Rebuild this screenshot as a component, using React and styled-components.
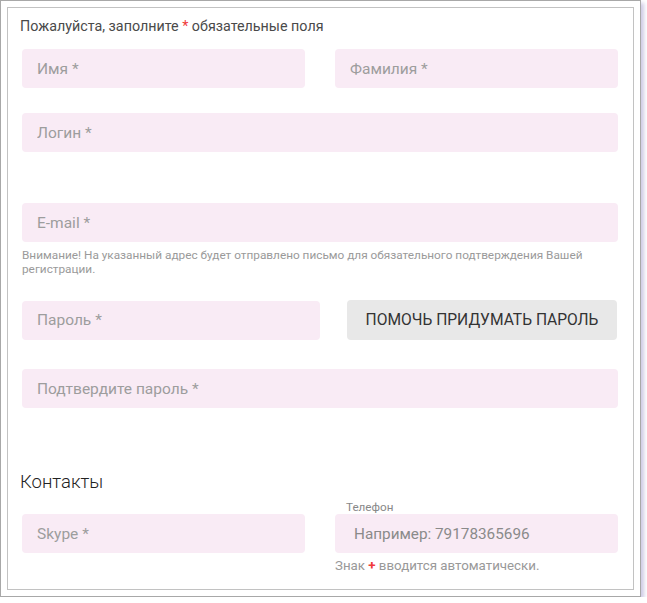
import React from "react";
import styled, { createGlobalStyle } from "styled-components";

const Global = createGlobalStyle`
  html, body { margin: 0; padding: 0; background: #fff; }
  body { font-family: Roboto, "Noto Sans", Arial, sans-serif; }
  * { box-sizing: border-box; }
`;

const Frame = styled.div`
  width: 641px;
  height: 597px;
  border: 1px solid #a8a8a8;
  padding: 6px;
  background: #fff;
  box-shadow: 3px 3px 4px rgba(190, 184, 220, 0.75);
`;

const Panel = styled.div`
  height: 583px;
  border: 1px solid #c2c2c2;
  padding: 10px 15px 0 14px;
  display: flex;
  flex-direction: column;
  & > * { flex-shrink: 0; }
`;

const Title = styled.div`
  margin-left: -2px;
  font-size: 14.3px;
  line-height: 16px;
  color: #4a4a4a;
`;

const Req = styled.span`
  color: #f03a3a;
`;

const Row = styled.div`
  display: flex;
  gap: ${(p) => p.$gap || 30}px;
  align-items: ${(p) => p.$align || "center"};
  margin-top: ${(p) => p.$mt || 0}px;
`;

const Col = styled.div`
  flex: 1;
  min-width: 0;
  display: flex;
  flex-direction: column;
  padding-top: ${(p) => p.$pt || 0}px;
`;

const Field = styled.input`
  display: block;
  width: 100%;
  min-width: 0;
  flex: ${(p) => (p.$grow ? "1 1 0" : "none")};
  height: 39px;
  margin-top: ${(p) => p.$mt || 0}px;
  border: none;
  outline: none;
  border-radius: 4px;
  background: #f9ebf5;
  padding: 0 0 0 ${(p) => p.$pl || 15}px;
  font-family: Roboto, "Noto Sans", Arial, sans-serif;
  font-size: ${(p) => p.$fs || 15.5}px;
  color: #333;
  &::placeholder {
    color: ${(p) => p.$ph || "#9d9d9d"};
    opacity: 1;
  }
`;

const Hint = styled.div`
  margin-top: 6px;
  font-size: 11.8px;
  line-height: 14px;
  color: #9a9a9a;
  padding-right: 20px;
`;

const HelpButton = styled.button`
  flex: none;
  width: 270px;
  height: 40px;
  margin-right: 1px;
  border: none;
  border-radius: 4px;
  background: #e8e8e8;
  color: #333;
  font-family: Roboto, "Noto Sans", Arial, sans-serif;
  font-size: 15.6px;
  text-transform: uppercase;
  cursor: pointer;
  padding: 0;
`;

const Heading = styled.div`
  margin-top: 62px;
  margin-left: -2px;
  font-size: 18.5px;
  font-weight: 300;
  line-height: 24px;
  color: #222;
`;

const Label = styled.div`
  font-size: 11.7px;
  line-height: 13px;
  color: #888;
  padding-left: 11px;
`;

const Note = styled.div`
  margin-top: 6px;
  font-size: 13.3px;
  line-height: 14px;
  color: #999;
`;

const Plus = styled.span`
  color: #f03a3a;
  font-weight: 700;
`;

export default function App() {
  return (
    <>
      <Global />
      <Frame>
        <Panel>
          <Title>
            Пожалуйста, заполните <Req>*</Req> обязательные поля
          </Title>
          <Row $mt={15}>
            <Field $grow placeholder="Имя *" />
            <Field $grow placeholder="Фамилия *" />
          </Row>
          <Field $mt={25} placeholder="Логин *" />
          <Field $mt={51} placeholder="E-mail *" />
          <Hint>
            Внимание! На указанный адрес будет отправлено письмо для
            обязательного подтверждения Вашей регистрации.
          </Hint>
          <Row $mt={24} $gap={27}>
            <Field $grow placeholder="Пароль *" />
            <HelpButton type="button">Помочь придумать пароль</HelpButton>
          </Row>
          <Field $mt={29} placeholder="Подтвердите пароль *" />
          <Heading>Контакты</Heading>
          <Row $mt={7} $align="flex-start">
            <Col $pt={13}>
              <Field placeholder="Skype *" />
            </Col>
            <Col>
              <Label>Телефон</Label>
              <Field $pl={19} $fs={15.3} $ph="#8a8a8a" placeholder="Например: 79178365696" />
              <Note>
                Знак <Plus>+</Plus> вводится автоматически.
              </Note>
            </Col>
          </Row>
        </Panel>
      </Frame>
    </>
  );
}
